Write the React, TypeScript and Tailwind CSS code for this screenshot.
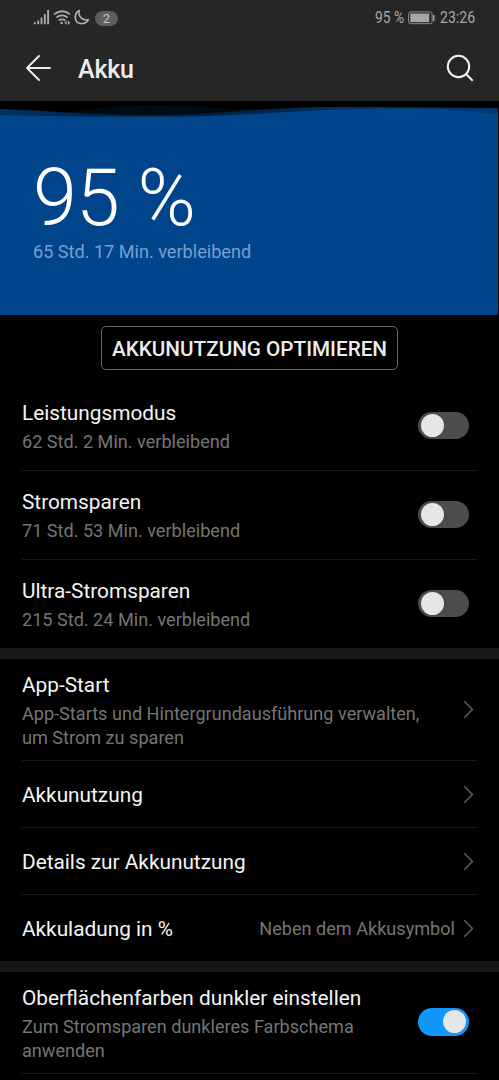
import React from "react";

function Toggle({ on = false }: { on?: boolean }) {
  return (
    <span
      className={
        on
          ? "mb-[2px] flex h-[28px] w-[51px] shrink-0 items-center justify-end rounded-full bg-[#1296fc] pr-[3px]"
          : "flex h-[27px] w-[51px] shrink-0 items-center rounded-full bg-[#4c4c4c] pl-[3px]"
      }
    >
      <span className="size-[23px] rounded-full bg-[#e6e6e6]" />
    </span>
  );
}

function Chevron() {
  return (
    <svg className="mr-[3px] h-[19px] w-[11px] shrink-0" viewBox="0 0 11 19" fill="none" stroke="#5a5a5a" strokeWidth="1.6">
      <path d="M1.2 1.2 9.4 9.5 1.2 17.8" />
    </svg>
  );
}

function Label({ title, children }: { title: string; children: React.ReactNode }) {
  return (
    <div className="flex-1 pt-[2px]">
      <div className="text-[20.8px] leading-[28px] text-[#f5f5f5]">{title}</div>
      <div className="mt-[3px] text-[18.1px] leading-[24px] text-[#757575]">{children}</div>
    </div>
  );
}

function ModeRow({ title, time, size }: { title: string; time: string; size: string }) {
  return (
    <div className={"mx-[22px] flex items-center justify-between border-[#191919] pr-[8px] " + size}>
      <Label title={title}>{time}</Label>
      <Toggle />
    </div>
  );
}

function LinkRow({ title, value, size }: { title: string; value?: string; size: string }) {
  return (
    <div className={"mx-[22px] flex items-center border-[#191919] " + size}>
      <span className="flex-1 pt-[3px] text-[20.8px] text-[#f5f5f5]">{title}</span>
      <span className="mr-[8px] pt-[2px] text-[18.1px] text-[#757575]">{value}</span>
      <Chevron />
    </div>
  );
}

function StatusBar() {
  return (
    <div className="flex h-[36px] items-center justify-between pr-[24px] pl-[33px] text-[#a6a6a6]">
      <div className="flex items-center">
        <svg className="h-[20px] w-[60px]" viewBox="33 8 60 20" fill="none" stroke="#acacac">
          <path strokeWidth="1.9" d="M34.9 22.3v2M38.2 20.5v3.8M41.5 17.5v6.8M44.8 14v10.3M48.1 10v14.3" />
          <g strokeWidth="1.8">
            <path d="M54 14.4q8-6.4 16 0M56.3 17.6q5.7-4.3 11.4 0M58.7 20.6q3.3-2.4 6.6 0" />
          </g>
          <circle cx="61.7" cy="23" r="1.3" fill="#acacac" stroke="none" />
          <path d="m66.6 20.6-2.2 2.2 2.2 2.2zM67.9 20.6l2.2 2.2-2.2 2.2z" fill="#acacac" stroke="none" />
          <path strokeWidth="1.7" strokeLinejoin="round" d="M79.3 10.6c-6 3.3-5.3 13 2.500 13 3 0 5.400-1.500 6.600-3.900-6.200 1.300-10.700-3.600-9.100-9.100z" />
        </svg>
        <span className="ml-[2px] flex h-[15px] w-[23px] items-center justify-center rounded-full bg-[#5e5e5e] text-[13px] leading-[15px] text-[#cacaca]">
          2
        </span>
      </div>
      <div className="flex items-center text-[16px] whitespace-nowrap">
        <span className="w-[29px] origin-left scale-x-[.86]">95 %</span>
        <svg className="mr-[5px] ml-[4px] h-[14px] w-[27px]" viewBox="0 0 27 14" fill="none">
          <rect x=".6" y=".9" width="23.5" height="11.8" rx="2" stroke="#8c8c8c" />
          <rect x="2.3" y="2.5" width="19" height="8.6" fill="#a6a6a6" />
          <path d="M25.700 4v6" stroke="#a6a6a6" strokeWidth="1.5" />
        </svg>
        <span className="w-[35px] origin-left scale-x-[.88]">23:26</span>
      </div>
    </div>
  );
}

export default function App() {
  return (
    <main className="flex h-[1080px] w-[499px] flex-col overflow-hidden bg-black font-[Roboto,sans-serif]">
      <header className="h-[101px] shrink-0 bg-[#262626]">
        <StatusBar />
        <div className="flex h-[64px] items-center pr-[25px] pl-[25px]">
          <svg className="h-[28px] w-[27px]" viewBox="0 0 27 28" fill="none" stroke="#ececec" strokeWidth="1.9" strokeLinecap="round" strokeLinejoin="round">
            <path d="M14 2 2 14l12 12M2 14h23" />
          </svg>
          <h1 className="ml-[26px] flex-1 pt-[4px] text-[25px] tracking-[-0.2px] font-medium text-[#ececec]">Akku</h1>
          <svg className="h-[28px] w-[28px]" viewBox="0 0 28 28" fill="none" stroke="#f2f2f2" strokeWidth="2">
            <circle cx="12.5" cy="12.5" r="10.7" />
            <path d="m20 20 6.7 6.7" />
          </svg>
        </div>
      </header>

      <svg className="h-[24px] w-[498px] shrink-0" viewBox="0 0 499 24" preserveAspectRatio="none">
        <defs>
          <linearGradient id="crest" x1="0" x2="1" y1="0" y2="0">
            <stop offset="0" stopColor="#003366" />
            <stop offset=".3" stopColor="#001c38" />
            <stop offset=".5" stopColor="#002448" />
            <stop offset=".7" stopColor="#003368" />
            <stop offset="1" stopColor="#00376f" />
          </linearGradient>
        </defs>
        <path fill="#020a12" d="M0 8 70 11C110 4 160 3 220 7S400 6 499 7V24H0z" />
        <path fill="url(#crest)" d="M0 8C50 10 90 14 150 14 220 14 260 6 340 6S450 7 499 7V24H0z" />
        <path fill="#00448c" d="M0 14C60 16 120 15.5 180 15.5S320 7.5 390 7.5 460 10 499 13V24H0z" />
      </svg>
      <section className="h-[190px] w-[498px] shrink-0 bg-[#00448c] pt-[35px] pl-[33px]">
        <div className="text-[79px] leading-[76px] font-light tracking-[-0.8px] text-white">95 %</div>
        <div className="mt-[4px] text-[18.1px] leading-[24px] text-[#78a0cd]">65 Std. 17 Min. verbleibend</div>
      </section>

      <div className="flex h-[66px] shrink-0 items-center justify-center">
        <button className="h-[44px] w-[297px] rounded-[5px] border border-[#666] pt-[3px] text-[20.7px] font-medium text-[#ececec]">
          AKKUNUTZUNG OPTIMIEREN
        </button>
      </div>

      <section className="shrink-0">
        <ModeRow title="Leistungsmodus" time="62 Std. 2 Min. verbleibend" size="h-[90px] border-b" />
        <ModeRow title="Stromsparen" time="71 Std. 53 Min. verbleibend" size="h-[89px] border-b pb-[2px]" />
        <ModeRow title="Ultra-Stromsparen" time="215 Std. 24 Min. verbleibend" size="h-[88px] pb-[2px]" />
      </section>

      <section className="shrink-0 border-t-[11px] border-[#171717]">
        <div className="mx-[22px] flex h-[102px] items-center border-b border-[#191919]">
          <Label title="App-Start">
            App-Starts und Hintergrundausführung verwalten,
            <br />
            um Strom zu sparen
          </Label>
          <Chevron />
        </div>
        <LinkRow title="Akkunutzung" size="h-[67px] border-b" />
        <LinkRow title="Details zur Akkunutzung" size="h-[67px] border-b" />
        <LinkRow title="Akkuladung in %" value="Neben dem Akkusymbol" size="h-[66px]" />
      </section>

      <section className="shrink-0 border-t-[11px] border-[#171717]">
        <div className="mx-[22px] flex h-[102px] items-center justify-between border-b border-[#191919] pr-[8px]">
          <Label title="Oberflächenfarben dunkler einstellen">
            Zum Stromsparen dunkleres Farbschema
            <br />
            anwenden
          </Label>
          <Toggle on />
        </div>
      </section>
    </main>
  );
}
